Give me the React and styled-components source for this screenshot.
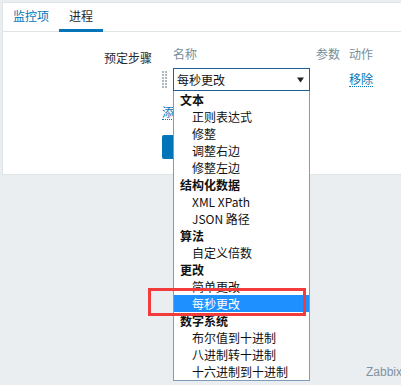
import React from "react";
import styled, { createGlobalStyle } from "styled-components";

const Global = createGlobalStyle`
  html, body { margin: 0; padding: 0; overflow: hidden; }
  body {
    background: #ebeef0;
    font-family: "Noto Sans CJK SC", "Liberation Sans", sans-serif;
    font-size: 12px;
    color: #1f2c33;
  }
`;

const Page = styled.div`
  width: 401px;
  height: 385px;
  padding-top: 2px;
  box-sizing: border-box;
  overflow: hidden;
`;

const Panel = styled.div`
  margin-left: 2px;
  background: #fff;
  border: 1px solid #dfe4e7;
  border-right: none;
  padding-bottom: 15px;
`;

const TabBar = styled.div`
  display: flex;
  border-bottom: 1px solid #dfe4e7;
`;

const Tab = styled.div`
  padding: 0 10px;
  line-height: 26px;
  border-bottom: 3px solid ${(p) => (p.$active ? "#0275b8" : "transparent")};
  margin-bottom: -1px;
  color: ${(p) => (p.$active ? "#1f2c33" : "#0275b8")};
`;

const Form = styled.div`
  display: grid;
  grid-template-columns: 149px 1fr;
  column-gap: 10px;
  padding-top: 14px;
`;

const Label = styled.div`
  text-align: right;
  line-height: 16px;
  padding-top: 4px;
`;

const Field = styled.div`
  display: flex;
  flex-direction: column;
`;

const Table = styled.div`
  display: grid;
  grid-template-columns: 11px 137px 39px auto;
  row-gap: 6px;
  align-items: center;
`;

const Th = styled.div`
  color: #768d99;
  line-height: 16px;
  padding-left: ${(p) => p.$pad || 0}px;
`;

const Handle = styled.svg`
  display: block;
`;

const SelectWrap = styled.div`
  position: relative;
`;

const Select = styled.div`
  height: 23px;
  box-sizing: border-box;
  border: 1px solid #1d5f96;
  display: flex;
  align-items: center;
  justify-content: space-between;
  padding: 0 5px 0 3px;
  color: #111;
`;

const List = styled.div`
  position: absolute;
  top: 100%;
  left: 0;
  width: 137px;
  box-sizing: border-box;
  background: #fff;
  border: 1px solid #7f9db9;
  border-top: none;
  z-index: 5;
`;

const Option = styled.div`
  height: 17px;
  line-height: 17px;
  white-space: nowrap;
  padding-left: ${(p) => (p.$group ? 6 : 18)}px;
  font-weight: ${(p) => (p.$group ? 700 : 400)};
  background: ${(p) => (p.$selected ? "#1e90ff" : "transparent")};
  color: ${(p) => (p.$selected ? "#fff" : "#111")};
`;

const Mark = styled.div`
  position: absolute;
  left: -26px;
  top: 197px;
  width: 158px;
  height: 28px;
  box-sizing: border-box;
  border: 3px solid #f23b3b;
  pointer-events: none;
`;

const Link = styled.span`
  color: #0275b8;
  border-bottom: 1px dotted #0275b8;
  line-height: 14px;
  justify-self: start;
`;

const AddLink = styled(Link)`
  align-self: flex-start;
  margin-top: 14px;
`;

const Button = styled.div`
  align-self: flex-start;
  margin-top: 15px;
  height: 24px;
  width: 60px;
  background: #0275b8;
  border-radius: 2px;
  color: #fff;
  line-height: 24px;
  text-align: center;
`;

const Footer = styled.div`
  margin-top: 189px;
  padding-left: 366px;
  white-space: nowrap;
  font-family: "Liberation Sans", Arial, sans-serif;
  font-size: 12px;
  line-height: 16px;
  color: #8193a0;
`;

const options = [
  { t: "文本", g: true },
  { t: "正则表达式" },
  { t: "修整" },
  { t: "调整右边" },
  { t: "修整左边" },
  { t: "结构化数据", g: true },
  { t: "XML XPath" },
  { t: "JSON 路径" },
  { t: "算法", g: true },
  { t: "自定义倍数" },
  { t: "更改", g: true },
  { t: "简单更改" },
  { t: "每秒更改", s: true },
  { t: "数字系统", g: true },
  { t: "布尔值到十进制" },
  { t: "八进制转十进制" },
  { t: "十六进制到十进制" },
];

function Dots() {
  const rects = [];
  for (let r = 0; r < 6; r++) {
    for (let c = 0; c < 2; c++) {
      rects.push(<rect key={r + "-" + c} x={c * 3} y={r * 3} width="2" height="2" fill="#acbbc2" />);
    }
  }
  return (
    <Handle width="5" height="18" viewBox="0 0 5 18">
      {rects}
    </Handle>
  );
}

export default function App() {
  return (
    <Page>
      <Global />
      <Panel>
        <TabBar>
          <Tab>监控项</Tab>
          <Tab $active>进程</Tab>
        </TabBar>
        <Form>
          <Label>预定步骤</Label>
          <Field>
            <Table>
              <span />
              <Th>名称</Th>
              <Th $pad={6}>参数</Th>
              <Th>动作</Th>
              <Dots />
              <SelectWrap>
                <Select>
                  <span>每秒更改</span>
                  <svg width="7" height="6" viewBox="0 0 7 6">
                    <path d="M0 0.5 H7 L3.5 5.5 Z" fill="#222" />
                  </svg>
                </Select>
                <List>
                  {options.map((o) => (
                    <Option key={o.t} $group={o.g} $selected={o.s}>
                      {o.t}
                    </Option>
                  ))}
                  <Mark />
                </List>
              </SelectWrap>
              <span />
              <Link>移除</Link>
            </Table>
            <AddLink>添加</AddLink>
            <Button>更新</Button>
          </Field>
        </Form>
      </Panel>
      <Footer>Zabbix 5.0.2. © 2001–2020, Zabbix SIA</Footer>
    </Page>
  );
}
